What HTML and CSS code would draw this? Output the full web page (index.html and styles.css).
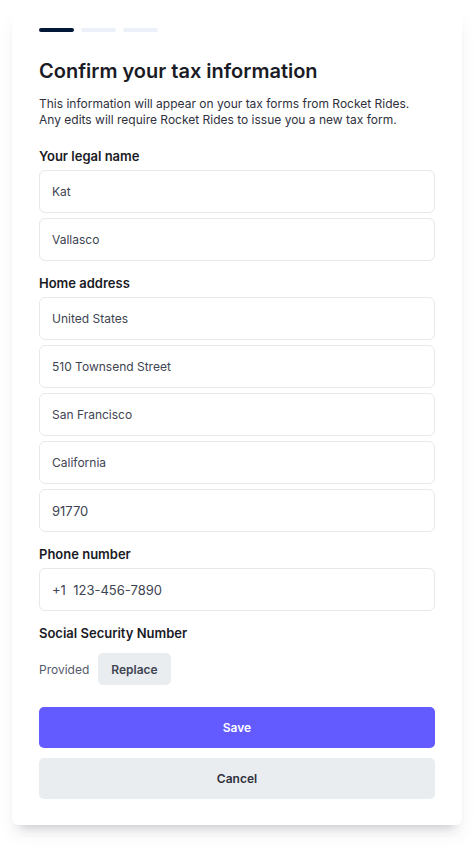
FILE: index.html
```html
<!DOCTYPE html>
<html lang="en">
<head>
  <meta charset="utf-8">
  <meta name="viewport" content="width=device-width, initial-scale=1">
  <title>Confirm your tax information</title>
  <link rel="stylesheet" href="styles.css">
</head>
<body>
  <main class="card">
    <div class="steps">
      <span class="step active"></span>
      <span class="step"></span>
      <span class="step"></span>
    </div>
    <h1>Confirm your tax information</h1>
    <p class="intro">This information will appear on your tax forms from Rocket Rides.<br>Any edits will require Rocket Rides to issue you a new tax form.</p>

    <form>
      <fieldset>
        <legend>Your legal name</legend>
        <input type="text" aria-label="First name" value="Kat">
        <input type="text" aria-label="Last name" value="Vallasco">
      </fieldset>

      <fieldset>
        <legend>Home address</legend>
        <input type="text" aria-label="Country" value="United States">
        <input type="text" aria-label="Street address" value="510 Townsend Street">
        <input type="text" aria-label="City" value="San Francisco">
        <input type="text" aria-label="State" value="California">
        <input type="text" class="digits" aria-label="ZIP code" value="91770">
      </fieldset>

      <fieldset>
        <legend><label for="phone">Phone number</label></legend>
        <input type="tel" class="digits" id="phone" value="+1  123-456-7890">
      </fieldset>

      <fieldset>
        <legend>Social Security Number</legend>
        <div class="ssn">
          <span>Provided</span>
          <button type="button" class="replace">Replace</button>
        </div>
      </fieldset>

      <div class="actions">
        <button type="submit" class="save">Save</button>
        <button type="button" class="cancel">Cancel</button>
      </div>
    </form>
  </main>
</body>
</html>
```
FILE: styles.css
```css
* {
  box-sizing: border-box;
}

body {
  margin: 0;
  padding: 12px 12px 24px;
  background: #fff;
  color: #1a1b25;
  font-family: Inter, sans-serif;
  font-size: 12px;
}

.card {
  padding: 16px 27px 26px;
  border-radius: 6px;
  background: #fff;
  box-shadow: 0 10px 10px -8px rgba(60, 60, 80, 0.26), 0 10px 16px rgba(60, 66, 87, 0.06);
}

.steps {
  display: flex;
  gap: 7px;
}

.step {
  width: 35px;
  height: 4px;
  border-radius: 2px;
  background: #ecf1f9;
}

.step.active {
  background: #031836;
}

h1 {
  margin: 26px 0 12px;
  font-size: 20px;
  line-height: 26px;
  font-weight: 600;
}

.intro {
  margin: 0 0 20px;
  line-height: 16px;
  color: #30313d;
}

fieldset {
  display: flex;
  flex-direction: column;
  gap: 5px;
  min-width: 0;
  margin: 0 0 14px;
  padding: 0;
  border: 0;
}

legend {
  padding: 0 0 6px;
  font-size: 13px;
  font-weight: 600;
  line-height: 16px;
}

input {
  width: 100%;
  height: 43px;
  padding: 0 12px;
  border: 1px solid #e6e8eb;
  border-radius: 6px;
  background: #fff;
  color: #404452;
  font: inherit;
}

.digits {
  font-size: 13px;
}

.ssn {
  display: flex;
  align-items: center;
  gap: 9px;
  padding-top: 6px;
  color: #545969;
}

button {
  height: 41px;
  border: 0;
  border-radius: 5px;
  background: #e9edf0;
  color: #30313d;
  font: inherit;
  font-weight: 600;
  cursor: pointer;
}

.replace {
  height: 32px;
  padding: 0 13px;
  color: #404452;
}

.actions {
  display: grid;
  gap: 10px;
  margin-top: 22px;
}

.save {
  background: #635bff;
  color: #fff;
}
```
